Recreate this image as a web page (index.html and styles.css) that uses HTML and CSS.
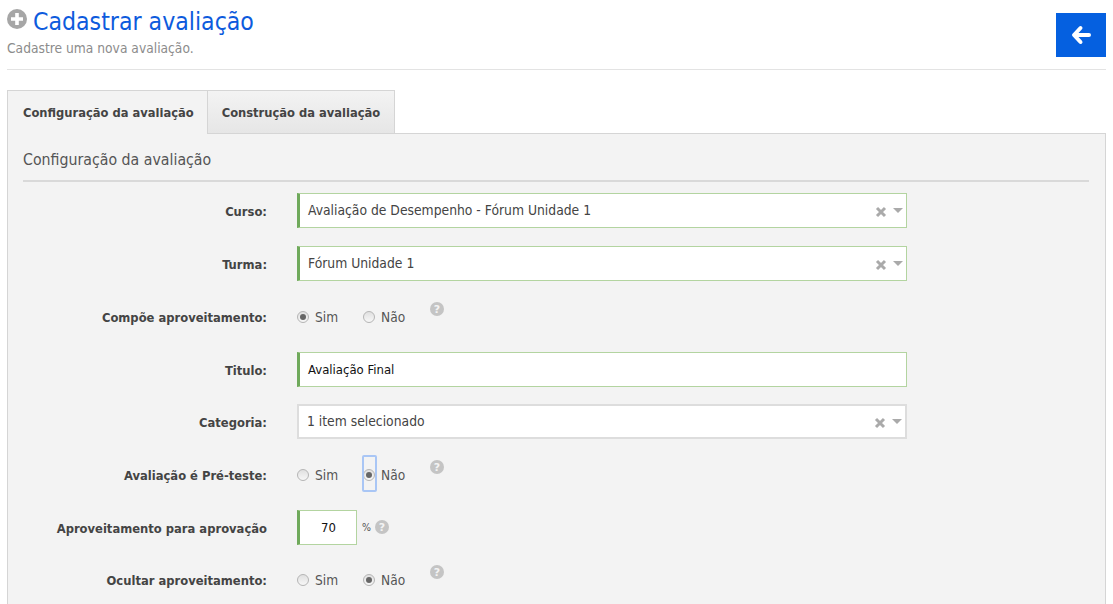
FILE: index.html
```html
<!DOCTYPE html>
<html lang="pt-BR">
<head>
<meta charset="utf-8">
<title>Cadastrar avaliação</title>
<link rel="stylesheet" href="styles.css">
</head>
<body>
<header class="page-head">
  <div class="page-head-text">
    <h1 class="page-title">
      <svg class="title-icon" viewBox="0 0 20 20" aria-hidden="true"><circle cx="10" cy="10" r="10" fill="#a6a6a6"/><path d="M8.2 4h3.6v4.2H16v3.6h-4.2V16H8.2v-4.2H4V8.2h4.2z" fill="#fff"/></svg>
      <span>Cadastrar avaliação</span>
    </h1>
    <p class="page-sub">Cadastre uma nova avaliação.</p>
  </div>
  <a class="back-btn" href="#" aria-label="Voltar">
    <svg viewBox="0 0 20 20" width="20" height="20" aria-hidden="true"><path d="M9.5 3 3 10l6.5 7M3.5 10H18" fill="none" stroke="#fff" stroke-width="4" stroke-linecap="round" stroke-linejoin="round"/></svg>
  </a>
</header>

<nav class="tabs">
  <a class="tab tab-active" href="#">Configuração da avaliação</a>
  <a class="tab" href="#">Construção da avaliação</a>
</nav>

<main class="panel">
  <h2 class="panel-title">Configuração da avaliação</h2>
  <form class="form">
    <div class="row">
      <label class="row-label">Curso:</label>
      <div class="field field-ok select"><span class="field-value">Avaliação de Desempenho - Fórum Unidade 1</span><svg class="clear" viewBox="0 0 12 12" aria-hidden="true"><path d="M2 2l8 8M10 2l-8 8" stroke="#aaa" stroke-width="3"/></svg><span class="caret"></span></div>
    </div>
    <div class="row">
      <label class="row-label">Turma:</label>
      <div class="field field-ok select"><span class="field-value">Fórum Unidade 1</span><svg class="clear" viewBox="0 0 12 12" aria-hidden="true"><path d="M2 2l8 8M10 2l-8 8" stroke="#aaa" stroke-width="3"/></svg><span class="caret"></span></div>
    </div>
    <div class="row">
      <label class="row-label">Compõe aproveitamento:</label>
      <div class="radios">
        <label class="radio"><span class="dot dot-on"></span>Sim</label>
        <label class="radio"><span class="dot"></span>Não</label>
        <svg class="help help-radios" viewBox="0 0 14 14" aria-hidden="true"><circle cx="7" cy="7" r="7" fill="#c4c4c4"/><text x="7" y="11" text-anchor="middle" class="help-q">?</text></svg>
      </div>
    </div>
    <div class="row">
      <label class="row-label">Titulo:</label>
      <div class="field field-ok"><span class="field-value field-dark">Avaliação Final</span></div>
    </div>
    <div class="row row-tight">
      <label class="row-label">Categoria:</label>
      <div class="field field-plain select"><span class="field-value">1 item selecionado</span><svg class="clear" viewBox="0 0 12 12" aria-hidden="true"><path d="M2 2l8 8M10 2l-8 8" stroke="#aaa" stroke-width="3"/></svg><span class="caret"></span></div>
    </div>
    <div class="row">
      <label class="row-label">Avaliação é Pré-teste:</label>
      <div class="radios">
        <label class="radio"><span class="dot"></span>Sim</label>
        <label class="radio"><span class="focus-ring"></span><span class="dot dot-on"></span>Não</label>
        <svg class="help help-radios" viewBox="0 0 14 14" aria-hidden="true"><circle cx="7" cy="7" r="7" fill="#c4c4c4"/><text x="7" y="11" text-anchor="middle" class="help-q">?</text></svg>
      </div>
    </div>
    <div class="row">
      <label class="row-label">Aproveitamento para aprovação</label>
      <div class="percent">
        <div class="field field-ok field-num"><span class="field-dark">70</span></div>
        <span class="percent-sign">%</span>
        <svg class="help help-percent" viewBox="0 0 14 14" aria-hidden="true"><circle cx="7" cy="7" r="7" fill="#c4c4c4"/><text x="7" y="11" text-anchor="middle" class="help-q">?</text></svg>
      </div>
    </div>
    <div class="row row-tight">
      <label class="row-label">Ocultar aproveitamento:</label>
      <div class="radios">
        <label class="radio"><span class="dot"></span>Sim</label>
        <label class="radio"><span class="dot dot-on"></span>Não</label>
        <svg class="help help-radios" viewBox="0 0 14 14" aria-hidden="true"><circle cx="7" cy="7" r="7" fill="#c4c4c4"/><text x="7" y="11" text-anchor="middle" class="help-q">?</text></svg>
      </div>
    </div>
  </form>
</main>
</body>
</html>
```
FILE: styles.css
```css
* { box-sizing: border-box; }
html, body { height: 100%; }
body {
  margin: 0;
  padding: 0 7px;
  background: #fff;
  color: #444;
  font-family: "DejaVu Sans", sans-serif;
  font-stretch: condensed;
  font-size: 12px;
  overflow: hidden;
}
.page-head {
  display: flex;
  justify-content: space-between;
  align-items: flex-start;
  height: 70px;
  border-bottom: 1px solid #e3e3e3;
}
.page-title {
  display: flex;
  align-items: center;
  gap: 6px;
  margin: 6px 0 0;
  height: 30px;
  font-size: 24.6px;
  font-weight: 400;
  color: #0d5bdd;
}
.title-icon { width: 20px; height: 20px; margin-bottom: 5px; }
.page-sub { margin: 4px 0 0; font-size: 13.7px; color: #8c8c8c; }
.back-btn {
  display: flex;
  align-items: center;
  justify-content: center;
  width: 50px;
  height: 44px;
  margin-top: 13px;
  background: #0560e0;
}
.tabs { display: flex; margin-top: 20px; height: 44px; }
.tab {
  display: flex;
  align-items: center;
  height: 44px;
  padding: 0 14px;
  border: 1px solid #d5d5d5;
  border-left: 0;
  background: linear-gradient(#f3f3f3, #e6e6e6);
  color: #444;
  font-weight: 700;
  font-size: 12.8px;
  text-decoration: none;
}
.tab-active {
  position: relative;
  z-index: 1;
  padding: 0 13px 0 15px;
  border-left: 1px solid #d5d5d5;
  border-bottom: 0;
  background: #f3f3f3;
}
.panel {
  margin-top: -1px;
  height: 500px;
  padding: 15px 16px 15px 15px;
  background: #f3f3f3;
  border: 1px solid #d5d5d5;
}
.panel-title {
  margin: 0;
  height: 33px;
  padding-top: 1px;
  font-size: 15.75px;
  font-weight: 400;
  color: #555;
  border-bottom: 2px solid #d9d9d9;
}
.form { display: flex; flex-direction: column; gap: 18px; margin-top: 11px; }
.row { display: flex; align-items: center; height: 35px; }
.row-tight { margin-top: -1px; }
.row-label {
  width: 244px;
  margin-right: 30px;
  padding-top: 1px;
  text-align: right;
  font-weight: 700;
  font-size: 12.85px;
  color: #444;
}
.field {
  display: flex;
  align-items: center;
  width: 610px;
  height: 35px;
  padding-left: 8px;
  background: #fff;
  font-size: 13.78px;
  color: #444;
}
.field-ok { border: 1px solid #b3d4a0; border-left: 3px solid #6fa95b; }
.field-plain { border: 2px solid #ddd; padding-left: 8px; }
.field-value { flex: 1; padding-bottom: 2px; }
.field-dark { color: #111; font-size: 13px; padding-bottom: 0; }
.field-num { width: 60px; padding: 0 0 0 1px; justify-content: center; }
.clear { width: 12px; height: 12px; margin-right: 6px; margin-top: 3px; }
.caret {
  width: 0;
  height: 0;
  margin-right: 3px;
  border-left: 5px solid transparent;
  border-right: 5px solid transparent;
  border-top: 5px solid #aaa;
}
.radios { display: flex; align-items: center; position: relative; padding-top: 1px; }
.radio {
  display: flex;
  align-items: center;
  position: relative;
  gap: 6px;
  margin-right: 25px;
  font-size: 13.6px;
  color: #555;
}
.dot {
  width: 12px;
  height: 12px;
  border-radius: 50%;
  border: 1px solid #b5b5b5;
  background: linear-gradient(#e0e0e0, #f7f7f7);
  display: flex;
  align-items: center;
  justify-content: center;
  margin-top: -1px;
}
.dot-on::after {
  content: "";
  width: 6px;
  height: 6px;
  border-radius: 50%;
  background: #666;
}
.focus-ring {
  position: absolute;
  left: -1px;
  top: -12px;
  width: 15px;
  height: 37px;
  border: 2px solid #a9c6f5;
  border-radius: 2px;
}
.help { width: 14px; height: 14px; }
.help-radios { margin: -16px 0 0 0; }
.help-percent { margin: -3px 0 0 -1px; }
.help-q { font: 700 11px "DejaVu Sans", sans-serif; fill: #f3f3f3; }
.percent { display: flex; align-items: center; gap: 5px; padding-top: 1px; }
.percent .field { margin-top: -1px; }
.percent-sign { color: #555; font-size: 10.5px; margin-top: -2px; }
```
